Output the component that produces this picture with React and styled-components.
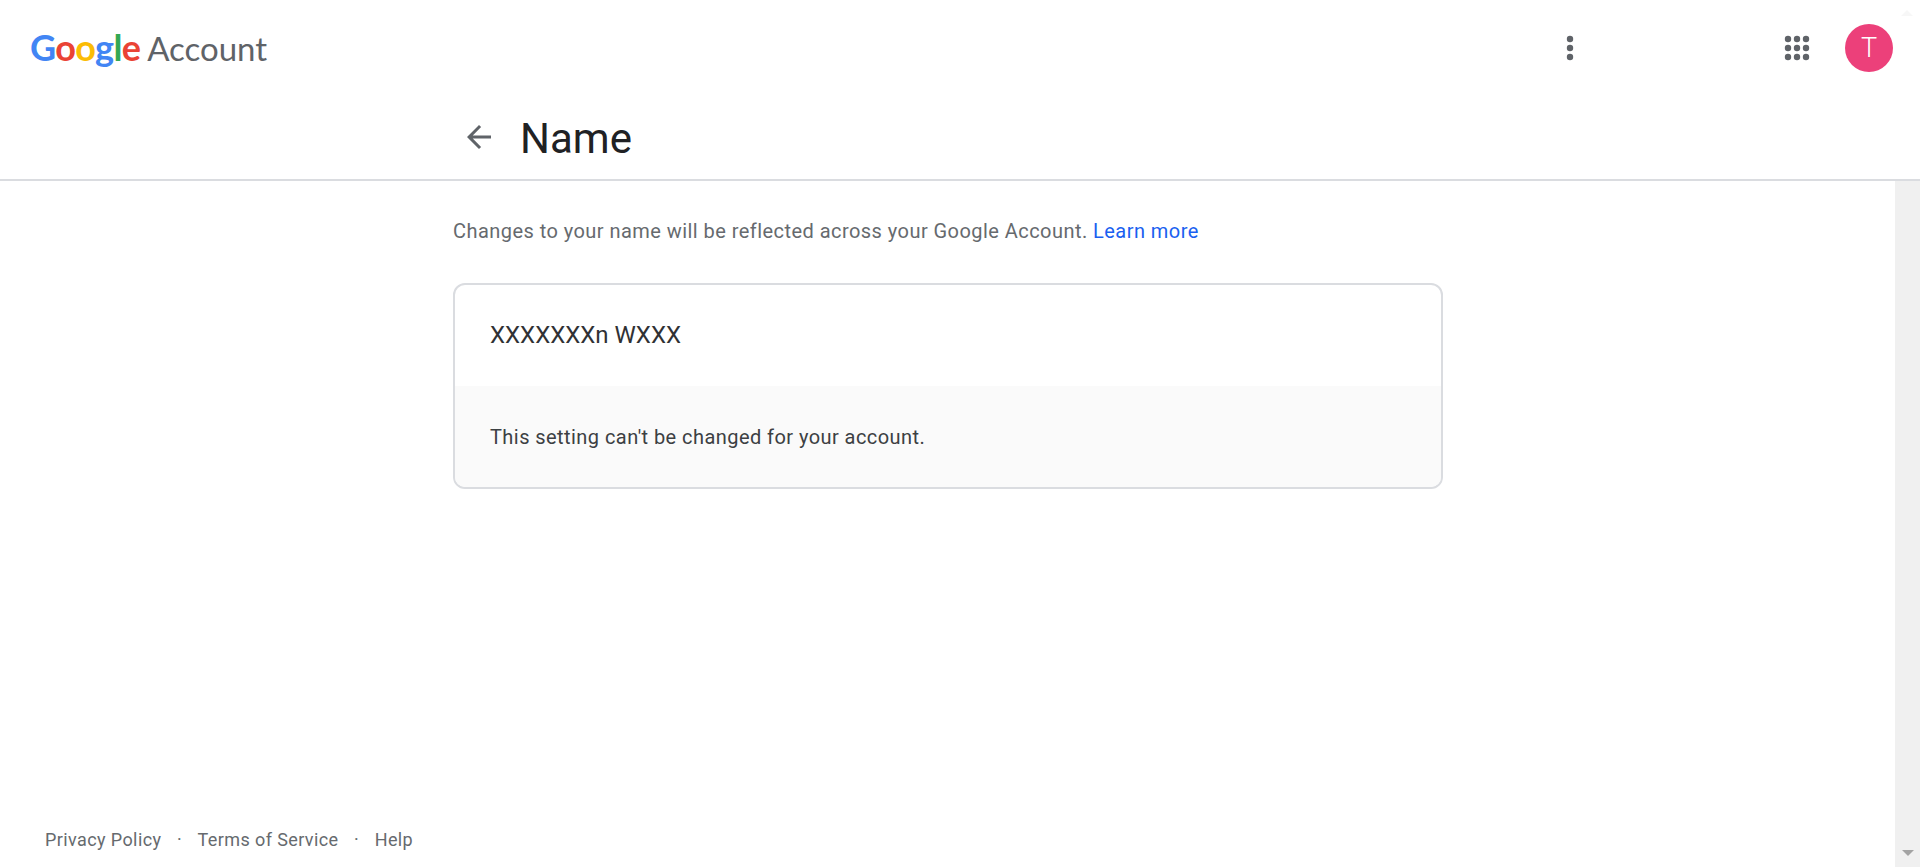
import React from 'react'
import styled, { createGlobalStyle } from 'styled-components'

const GlobalStyle = createGlobalStyle`
  html, body {
    margin: 0;
    padding: 0;
    height: 100%;
    overflow: hidden;
    background: #fff;
    font-family: Roboto, "Liberation Sans", sans-serif;
  }
`

const Page = styled.div`
  display: flex;
  flex-direction: column;
  height: 867px;
`

const Header = styled.header`
  position: relative;
  display: flex;
  flex-direction: column;
  height: 181px;
  box-sizing: border-box;
  border-bottom: 2px solid #dadce0;
`

const TopBar = styled.div`
  display: flex;
  align-items: center;
  height: 96px;
  padding: 0 27px 0 30px;
`

const Logo = styled.div`
  display: flex;
  align-items: baseline;
  gap: 7px;
  flex: 1;
  margin-top: -2px;
`

const Wordmark = styled.span`
  font-family: Lato, sans-serif;
  font-size: 36px;
  letter-spacing: -0.7px;
  font-weight: 700;
`

const Letter = styled.span`
  color: ${({ $color }) => $color};
`

const ProductName = styled.span`
  font-family: Lato, sans-serif;
  font-size: 33px;
  color: #5f6368;
`

const IconSlot = styled.div`
  display: flex;
  color: #5f6368;
  margin-right: ${({ $gap }) => $gap}px;
`

const Avatar = styled.div`
  width: 48px;
  height: 48px;
  border-radius: 50%;
  background: #ec407a;
  color: #fff;
  display: flex;
  align-items: center;
  justify-content: center;
  font-size: 27px;
  font-weight: 300;
`

const ScrollHint = styled.div`
  position: absolute;
  top: 10px;
  right: 7px;
  width: 0;
  height: 0;
  border-left: 6px solid transparent;
  border-right: 6px solid transparent;
  border-bottom: 6px solid #f7f7f7;
`

const TitleRow = styled.div`
  display: flex;
  align-items: center;
  padding-left: 461px;
  height: 84px;
`

const BackArrow = styled.svg`
  width: 36px;
  height: 36px;
  margin-right: 23px;
  color: #5f6368;
`

const Title = styled.h1`
  margin: 2px 0 0;
  font-size: 42px;
  font-weight: 400;
  color: #202124;
`

const Body = styled.div`
  flex: 1;
  display: flex;
  min-height: 0;
`

const Content = styled.main`
  flex: 1;
  display: flex;
  flex-direction: column;
  padding-left: 453px;
`

const Intro = styled.p`
  margin: 0;
  padding-top: 38px;
  font-size: 20px;
  letter-spacing: 0.45px;
  line-height: 24px;
  color: #666a6e;
`

const Link = styled.a`
  color: #1a5ff0;
  text-decoration: none;
`

const Card = styled.section`
  width: 990px;
  box-sizing: border-box;
  margin-top: 40px;
  border: 2px solid #dadce0;
  border-radius: 12px;
  overflow: hidden;
`

const NameRow = styled.div`
  display: flex;
  align-items: center;
  height: 101px;
  box-sizing: border-box;
  padding: 0 0 2px 35px;
  font-size: 24px;
  color: #303134;
`

const NoteRow = styled.div`
  display: flex;
  align-items: center;
  height: 101px;
  padding-left: 35px;
  background: #fafafa;
  font-size: 20px;
  letter-spacing: 0.44px;
  color: #3c4043;
`

const Footer = styled.footer`
  margin-top: auto;
  display: flex;
  align-items: center;
  height: 55px;
  margin-left: -408px;
  font-size: 18px;
  letter-spacing: 0.4px;
  color: #666a6e;
`

const Dot = styled.span`
  margin: 0 15.5px;
`

const ScrollTrack = styled.div`
  width: 25px;
  background: #f0f0f0;
  display: flex;
  align-items: flex-end;
  justify-content: center;
  padding-bottom: 11px;
  box-sizing: border-box;
`

const ScrollArrow = styled.div`
  width: 0;
  height: 0;
  border-left: 6px solid transparent;
  border-right: 6px solid transparent;
  border-top: 6px solid #a3a3a3;
`

const dotGrid = [5, 14, 23]

const App = () => {
  return (
    <Page>
      <GlobalStyle />
      <Header>
        <TopBar>
          <Logo>
            <Wordmark>
              <Letter $color="#4285f4">G</Letter>
              <Letter $color="#ea4335">o</Letter>
              <Letter $color="#fbbc05">o</Letter>
              <Letter $color="#4285f4">g</Letter>
              <Letter $color="#34a853">l</Letter>
              <Letter $color="#ea4335">e</Letter>
            </Wordmark>
            <ProductName>Account</ProductName>
          </Logo>
          <IconSlot $gap={199}>
            <svg width="28" height="28" viewBox="0 0 28 28" fill="currentColor">
              <circle cx="14" cy="5" r="3.2" />
              <circle cx="14" cy="14" r="3.2" />
              <circle cx="14" cy="23" r="3.2" />
            </svg>
          </IconSlot>
          <IconSlot $gap={34}>
            <svg width="28" height="28" viewBox="0 0 28 28" fill="currentColor">
              {dotGrid.map((cy) =>
                dotGrid.map((cx) => <circle key={`${cx}-${cy}`} cx={cx} cy={cy} r="3.2" />)
              )}
            </svg>
          </IconSlot>
          <Avatar>T</Avatar>
        </TopBar>
        <TitleRow>
          <BackArrow viewBox="0 0 24 24" fill="currentColor">
            <path d="M20 11H7.83l5.59-5.59L12 4l-8 8 8 8 1.41-1.41L7.83 13H20v-2z" />
          </BackArrow>
          <Title>Name</Title>
        </TitleRow>
        <ScrollHint />
      </Header>
      <Body>
        <Content>
          <Intro>
            Changes to your name will be reflected across your Google Account. <Link href="#">Learn more</Link>
          </Intro>
          <Card>
            <NameRow>XXXXXXXn WXXX</NameRow>
            <NoteRow>This setting can't be changed for your account.</NoteRow>
          </Card>
          <Footer>
            <span>Privacy Policy</span>
            <Dot>·</Dot>
            <span>Terms of Service</span>
            <Dot>·</Dot>
            <span>Help</span>
          </Footer>
        </Content>
        <ScrollTrack>
          <ScrollArrow />
        </ScrollTrack>
      </Body>
    </Page>
  )
}

export default App
